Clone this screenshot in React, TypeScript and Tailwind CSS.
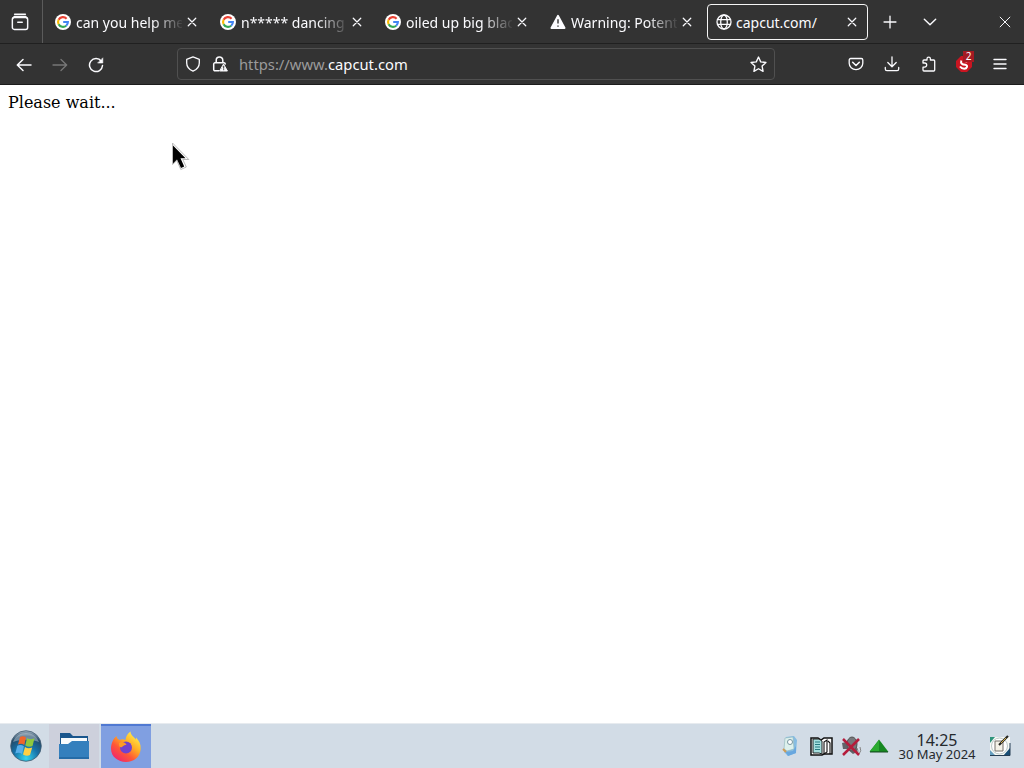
import React from "react";

type P = { children: React.ReactNode; className?: string; size?: number };

function Icon({ children, className = "", size = 16 }: P) {
  return (
    <svg
      width={size}
      height={size}
      viewBox="0 0 16 16"
      fill="none"
      stroke="currentColor"
      strokeWidth="1.3"
      strokeLinecap="round"
      strokeLinejoin="round"
      className={"block shrink-0 " + className}
    >
      {children}
    </svg>
  );
}

function Google() {
  return (
    <svg width="16" height="16" viewBox="0 0 16 16" className="block shrink-0">
      <circle cx="8" cy="8" r="8" fill="#fff" />
      <g fill="none" strokeWidth="2.1">
        <path d="M11.6 4.7A4.9 4.9 0 0 0 3.6 5.8" stroke="#ea4335" />
        <path d="M3.6 5.8a4.9 4.9 0 0 0 0 4.4" stroke="#fbbc05" />
        <path d="M3.6 10.2a4.9 4.9 0 0 0 7.6 1.5" stroke="#34a853" />
        <path d="M11.2 11.7A4.9 4.9 0 0 0 12.9 8H8.2" stroke="#4285f4" />
      </g>
    </svg>
  );
}

function Warning() {
  return (
    <svg width="16" height="16" viewBox="0 0 16 16" className="block shrink-0">
      <path d="M8 1.8 14.6 14H1.4Z" fill="#fbfbfe" stroke="#fbfbfe" strokeWidth="1.8" strokeLinejoin="round" />
      <path d="M8 5.2v4.2M8 11.5v1.2" stroke="#333" strokeWidth="1.4" />
    </svg>
  );
}

function Globe() {
  return (
    <Icon>
      <circle cx="8" cy="8" r="7" />
      <ellipse cx="8" cy="8" rx="3.3" ry="7" />
      <path d="M1.5 5.7h13M1.5 10.3h13" />
    </Icon>
  );
}

function Close() {
  return (
    <Icon size={10}>
      <path d="M2 2l12 12M14 2L2 14" strokeWidth="2" />
    </Icon>
  );
}

function Tab({ icon, title, active = false }: { icon: React.ReactNode; title: string; active?: boolean }) {
  return (
    <div
      className={
        "flex h-9 w-[161px] shrink-0 items-center rounded-[4px] border pr-[10px] " +
        (active ? "border-[#f5f5f5] pl-2" : "border-transparent pl-[7px]")
      }
    >
      {icon}
      <div
        className={
          "w-[106px] shrink-0 overflow-hidden whitespace-nowrap pt-[3px] text-[14px] leading-5 " +
          (active ? "ml-[4px]" : "ml-[5px] [mask-image:linear-gradient(to_right,black_72%,transparent_102%)]")
        }
      >
        {title}
      </div>
      <div className="ml-auto">
        <Close />
      </div>
    </div>
  );
}

function TabStrip() {
  return (
    <div className="flex h-[44px] items-center border-b border-[#202020]">
      <div className="flex h-full w-[43px] items-center justify-center border-r border-[#5b5b5b] pr-[3px]">
        <Icon size={18} className="mt-px">
          <path d="M3.2 1.2h9.6" />
          <rect x="1.2" y="4" width="13.6" height="10.6" rx="1.8" />
          <path d="M1.5 4.6 3 3.2h10l1.5 1.4M6 8.2h4" />
        </Icon>
      </div>
      <div className="ml-1 flex gap-1">
        <Tab icon={<Google />} title="can you help me" />
        <Tab icon={<Google />} title="n***** dancing - G" />
        <Tab icon={<Google />} title="oiled up big black" />
        <Tab icon={<Warning />} title="Warning: Potential" />
        <Tab icon={<Globe />} title="capcut.com/" active />
      </div>
      <Icon size={14} className="ml-[15px]">
        <path d="M8 1.2v13.6M1.2 8h13.6" strokeWidth="1.5" />
      </Icon>
      <Icon size={14} className="ml-[26px]">
        <path d="M1.5 4.8 8 11.2l6.5-6.4" strokeWidth="1.6" />
      </Icon>
      <Icon size={12} className="mr-[13px] ml-auto">
        <path d="M1.5 1.5l13 13M14.5 1.5l-13 13" strokeWidth="1.3" />
      </Icon>
    </div>
  );
}

function AddressBar() {
  return (
    <div className="ml-[73px] flex h-8 w-[598px] items-center rounded-[4px] border border-[#505050] px-[7px]">
      <Icon>
        <path d="M8 .9 14.3 3.3V7c0 3.8-2.5 6.6-6.3 8.2C4.2 13.6 1.7 10.8 1.7 7V3.3Z" />
      </Icon>
      <Icon className="ml-[11px]">
        <path d="M4.2 6.8V4.2a3.3 3.3 0 0 1 6.6 0v2.6M6.8 14.8H3a1.3 1.3 0 0 1-1.3-1.3V8.1A1.3 1.3 0 0 1 3 6.8h9a1.2 1.2 0 0 1 1.2 1.2" strokeWidth="1.5" />
        <path d="m11.7 8.4 3.7 6.6H8Z" fill="#fbfbfe" stroke="#fbfbfe" strokeWidth="1" />
        <path d="M11.7 10.3v2M11.7 13.6v.2" stroke="#333" strokeWidth="1" />
      </Icon>
      <div className="ml-[11px] text-[14.75px] leading-5 text-[#9b9b9b]">
        https://www.<span className="text-[#fbfbfe]">capcut.com</span>
      </div>
      <Icon size={17} className="ml-auto">
        <path d="m8 1 2.1 4.5 4.900.6-3.600 3.400.9 4.900L8 12l-4.300 2.400.9-4.900L1 6.100l4.900-.6Z" />
      </Icon>
    </div>
  );
}

function Toolbar() {
  return (
    <div className="flex h-[41px] items-center border-b border-[#1c1c1c] pl-4">
      <Icon className="translate-y-px">
        <path d="M15 8H1.5M7 2.5 1.3 8 7 13.5" strokeWidth="1.5" />
      </Icon>
      <Icon className="ml-5 translate-y-px text-[#777]">
        <path d="M1 8h13.5M9 2.5 14.7 8 9 13.5" />
      </Icon>
      <Icon className="ml-5 translate-y-px">
        <path d="M13.3 4.3A6.5 6.5 0 1 0 14.5 8.5" strokeWidth="1.5" />
        <path d="M14.8 1.2V6H10Z" fill="currentColor" strokeWidth=".6" />
      </Icon>
      <AddressBar />
      <div className="ml-[73px] flex items-center gap-5">
        <Icon>
          <path d="M2.7 2.5h10.6a1.5 1.5 0 0 1 1.5 1.5v3.3a6.8 6.3 0 0 1-13.6 0V4a1.5 1.5 0 0 1 1.5-1.5Z" />
          <path d="M4.7 6.3 8 9.5l3.3-3.2" strokeWidth="1.6" />
        </Icon>
        <Icon>
          <path d="M8 .8v9.7M3.8 6.5 8 10.7l4.2-4.2M1.3 11.5v1.6c0 1 .6 1.6 1.6 1.6h10.2c1 0 1.6-.6 1.6-1.6v-1.6" />
        </Icon>
        <Icon className="translate-x-px">
          <path d="M2 6.3V5a1 1 0 0 1 1-1h3V2.8a1.7 1.7 0 0 1 3.4 0V4h3.3a1 1 0 0 1 1 1v9a1 1 0 0 1-1 1H3a1 1 0 0 1-1-1v-2.8h1.6a2.1 2.1 0 0 0 0-4.2H2Z" />
        </Icon>
        <div className="relative h-4 w-4">
          <svg width="16" height="16" viewBox="0 0 16 16" className="block">
            <path d="M5 0h6l5 5v6l-5 5H5l-5-5V5Z" fill="#c91521" />
            <path d="M5.3 4.5c-1 3 1 4 4 4.2 3 .4 1.8 4-1 4-1.8 0-3.3-.8-4.3-2.2M9.5 5.5l3-.8" fill="none" stroke="#fff" strokeWidth="2" />
          </svg>
          <span className="absolute -top-[5px] left-[7px] h-[11px] w-[11px] bg-[#a41a22] text-center text-[10px] leading-[11px] text-white">2</span>
        </div>
        <Icon>
          <path d="M2 3.5h12M2 8h12M2 12.5h12" strokeWidth="1.4" />
        </Icon>
      </div>
    </div>
  );
}

function StartOrb() {
  return (
    <svg width="32" height="32" viewBox="0 0 32 32" className="block">
      <defs>
        <radialGradient id="orb" cx=".5" cy=".9" r=".9">
          <stop offset="0" stopColor="#35d7ef" />
          <stop offset=".45" stopColor="#1672a9" />
          <stop offset=".8" stopColor="#234a69" />
          <stop offset="1" stopColor="#a9b8c5" />
        </radialGradient>
      </defs>
      <circle cx="16" cy="16" r="15.3" fill="url(#orb)" stroke="#415a70" strokeWidth=".8" />
      <path d="M3 12C7 0 25 0 29 12c-8-3-18-3-26 0Z" fill="#fff" opacity=".35" />
      <path d="M10 7c2-1 4-1 6 .5L14.3 15c-2-1.5-4-1.5-6.3-.5Z" fill="#ef652b" />
      <path d="M17 8c2 1.5 4.5 1.5 7.5.3L22.5 16c-2 1-5 1-7.2-.5Z" fill="#8fc83e" />
      <path d="M7.3 15.7c2-1 4.5-1 6.6.5L12 24c-2-1.5-4.5-1.5-6.7-.5Z" fill="#58aeea" />
      <path d="M15 17c2 1.5 4.8 1.5 7.2.5L20 25c-2 1.2-4.5 1-7-.5Z" fill="#ffd044" />
    </svg>
  );
}

function Folder() {
  return (
    <svg width="32" height="32" viewBox="0 0 32 32" className="block">
      <path d="M1 3h10l3 3h15v21H1Z" fill="#1a568d" />
      <path d="M2 8h26v12H2Z" fill="#f7fafc" />
      <path d="M0 14h9l4-3h17v16.500a1.500 1.500 0 0 1-1.500 1.500h-27A1.500 1.500 0 0 1 0 27.500Z" fill="#347fbd" />
      <path d="M0 27h30v2H0Z" fill="#256ba7" />
    </svg>
  );
}

function Firefox() {
  return (
    <svg width="32" height="32" viewBox="0 0 32 32" className="block">
      <defs>
        <linearGradient id="fox" x1=".85" y1=".05" x2=".2" y2=".9">
          <stop offset="0" stopColor="#fff44f" />
          <stop offset=".4" stopColor="#ffad25" />
          <stop offset=".7" stopColor="#ff5737" />
          <stop offset="1" stopColor="#f22c67" />
        </linearGradient>
      </defs>
      <path d="M6.5 5c.3 2 1.3 3.3 3 4 2-.9 4-.8 6 0C15.8 5.5 17.5 2.5 20.5.5c.2 4 3.5 5.2 5.5 8V6.5c3 3 5 6.7 4.7 11.5C30 26 24 31 16 31S1 25.7 1 17.8c0-4.8 2-9.8 5.5-12.8Z" fill="url(#fox)" />
      <circle cx="16" cy="16.5" r="6" fill="#7043cf" />
      <path d="M9 12c3.5-2 6-.4 7.5 1.7-3.5.3-3.5 2.3-5.5 2.6-1.8 0-2-2-2-4.3Z" fill="#ff9b27" />
    </svg>
  );
}

function Tray() {
  return (
    <div className="flex translate-x-px items-center">
      <svg width="18" height="22" viewBox="0 0 18 22" className="block">
        <path d="m5 2 8-1 3 4-1 13-8 3-4-4Z" fill="#86bce2" />
        <path d="m4 3 8-1 1 12-7 2-3-2Z" fill="#ddf0ec" stroke="#8eb6bb" strokeWidth=".6" />
        <circle cx="9" cy="7" r="2.5" fill="#fff" stroke="#7795a0" />
        <path d="m2 13 3 4 7-1 3-5v7l-8 3Z" fill="#68a7df" />
        <path d="m2 14 3 3" stroke="#cf9b54" strokeWidth="2" />
      </svg>
      <svg width="23" height="21" viewBox="0 0 23 21" className="ml-[11px] block">
        <path d="M1 2h7l3 2 3-2h8v16h-8l-2 1H1Z" fill="#fff" stroke="#111" strokeWidth="1.5" />
        <path d="M3 3h6l3 2v13l-3-1H3Z" fill="#a6e0df" stroke="#222" />
        <path d="M5 6h5M5 8.500h5M5 11h5M5 13.500h5" stroke="#267b80" />
        <path d="M14 18V6l3-2v12l-3 2M18 5l2 2v11" stroke="#111" strokeWidth="1.1" fill="none" />
      </svg>
      <svg width="22" height="21" viewBox="0 0 22 21" className="ml-[8px] block">
        <path d="m1 7 4-1 6-5 5 3v12l-4 2-6-5H2Z" fill="#626368" />
        <ellipse cx="11" cy="8" rx="5" ry="7" fill="#77777b" stroke="#555" />
        <path d="M16 12q2 3 0 6m3-7q2 4-1 7" fill="none" stroke="#858585" />
        <path d="m2 3 16 16M18 3 2 19" stroke="#b51d3c" strokeWidth="2.5" />
      </svg>
      <svg width="20" height="14" viewBox="0 0 20 14" className="ml-[6px] block">
        <path d="M10 .5 19.5 13H.5Z" fill="#168821" />
        <path d="M10 1v11H1Z" fill="#2aaa30" />
        <path d="M1 13h18" stroke="#164d22" />
      </svg>
    </div>
  );
}

function Taskbar() {
  return (
    <div className="flex h-[45px] items-stretch border-t border-[#e7ebef] bg-[#d2dce6]">
      <div className="flex w-[49px] items-center justify-center pl-[3px]"><StartOrb /></div>
      <div className="flex w-[50px] items-center justify-center bg-[#cdd0dc] pl-px"><Folder /></div>
      <div className="ml-[2px] flex w-[50px] items-center justify-center border-t-2 border-[#5079d2] bg-[#809fe1]"><Firefox /></div>
      <div className="ml-auto flex items-center"><Tray /></div>
      <div className="ml-[10px] w-[78px] pt-[8px] text-center whitespace-nowrap text-[#25292d]">
        <div className="text-[16px] leading-[16px]">14:25</div>
        <div className="text-[13px] leading-[13px]">30 May 2024</div>
      </div>
      <svg width="24" height="24" viewBox="0 0 24 24" className="mr-[12px] ml-[12px] block self-center">
        <path d="M2 3h20v18H2Z" fill="#f7f9f6" />
        <path d="M2 3h5L2 9Z" fill="#2e947c" />
        <path d="M22 14v8h-7Z" fill="#174e76" />
        <path d="M2 16v5h5Z" fill="#659dbe" />
        <circle cx="11.5" cy="12" r="8" fill="#fff" stroke="#bac7c6" />
        <path d="M7 7h8v10H7Z" fill="#f4f2e8" stroke="#75716a" />
        <path d="m11 11 9-9" stroke="#252520" strokeWidth="2.2" />
        <path d="m13 9 5-5" stroke="#d2ad49" />
        <path d="M2 21.5h20V9" fill="none" stroke="#253d53" />
      </svg>
    </div>
  );
}

export default function App() {
  return (
    <div className="relative flex h-screen w-screen flex-col overflow-hidden bg-white font-['Noto_Sans',sans-serif]">
      <header className="bg-[#333333] text-[#fbfbfe]">
        <TabStrip />
        <Toolbar />
      </header>
      <main className="flex-1 px-2 pt-2 font-['DejaVu_Serif',serif] text-[16px] leading-[19px] text-black">
        Please wait...
      </main>
      <Taskbar />
      <svg width="22" height="30" viewBox="0 0 22 30" className="absolute top-[142px] left-[171px]">
        <path d="M1.5 1v21.5l4.3-4 4 9 5.5-2.5-3.5-7.5h6Z" fill="#fff" stroke="#bbb" strokeWidth="1" />
        <path d="M2 3.5v18l4-4L10 26l3.2-1.5-3.7-8.2h5Z" fill="#000" />
      </svg>
    </div>
  );
}
